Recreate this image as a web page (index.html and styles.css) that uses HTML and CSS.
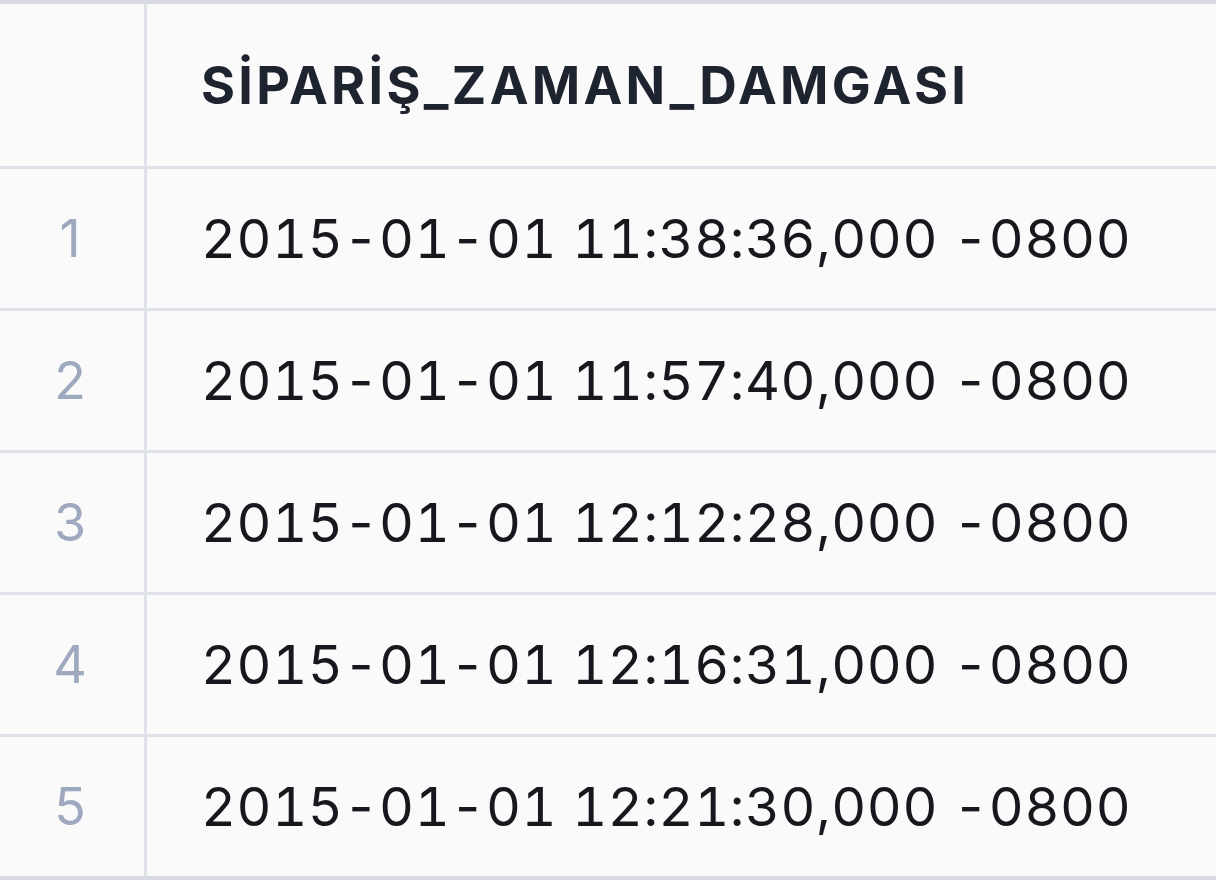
FILE: index.html
```html
<!DOCTYPE html>
<html lang="tr">
<head>
<meta charset="utf-8">
<link rel="stylesheet" href="styles.css">
</head>
<body>
<div class="table">
  <div class="row head">
    <div class="idx"></div>
    <div class="cell"><span class="hd">SİPARİŞ_ZAMAN_DAMGASI</span></div>
  </div>
  <div class="row">
    <div class="idx">1</div>
    <div class="cell"><span class="val">2015-01-01 11:38:36,000 -0800</span></div>
  </div>
  <div class="row">
    <div class="idx">2</div>
    <div class="cell"><span class="val">2015-01-01 11:57:40,000 -0800</span></div>
  </div>
  <div class="row">
    <div class="idx">3</div>
    <div class="cell"><span class="val">2015-01-01 12:12:28,000 -0800</span></div>
  </div>
  <div class="row">
    <div class="idx">4</div>
    <div class="cell"><span class="val">2015-01-01 12:16:31,000 -0800</span></div>
  </div>
  <div class="row">
    <div class="idx">5</div>
    <div class="cell"><span class="val">2015-01-01 12:21:30,000 -0800</span></div>
  </div>
</div>
</body>
</html>
```

FILE: styles.css
```css
html, body {
  margin: 0;
  padding: 0;
  background: #fafafa;
}
body {
  font-family: Inter, "Noto Sans", sans-serif;
  height: 880px;
  overflow: hidden;
}
.table {
  border-top: 4px solid #d8dbe3;
  border-bottom: 4px solid #d8dbe3;
}
.row {
  display: grid;
  grid-template-columns: 147px 1fr;
  height: 139px;
  border-bottom: 3px solid #dfe2e8;
}
.row:last-child {
  border-bottom: none;
}
.row.head {
  height: 162px;
}
.idx {
  border-right: 3px solid #dfe2e8;
  display: flex;
  align-items: center;
  justify-content: center;
  font-size: 52px;
  font-weight: 400;
  color: #9ea9bf;
  padding-right: 4px;
}
.cell {
  display: flex;
  align-items: center;
  padding-left: 54px;
}
.hd {
  font-size: 52px;
  font-weight: 700;
  letter-spacing: 3.3px;
  color: #1e2330;
}
.val {
  font-size: 54px;
  font-weight: 400;
  font-variant-numeric: tabular-nums;
  letter-spacing: 0.6px;
  color: #17181d;
}
```
